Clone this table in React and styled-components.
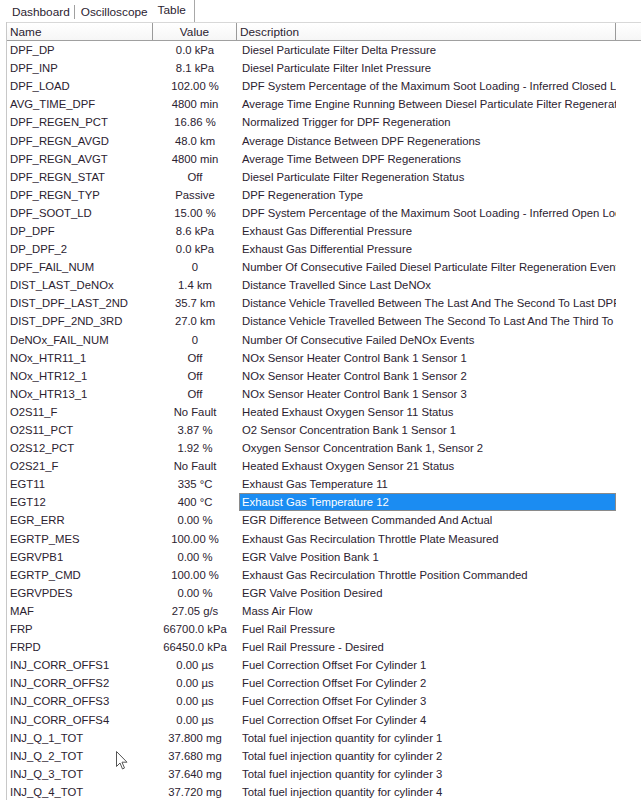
import React from 'react';
import styled, { createGlobalStyle } from 'styled-components';

const rows = [
  ['DPF_DP', '0.0 kPa', 'Diesel Particulate Filter Delta Pressure'],
  ['DPF_INP', '8.1 kPa', 'Diesel Particulate Filter Inlet Pressure'],
  ['DPF_LOAD', '102.00 %', 'DPF System Percentage of the Maximum Soot Loading - Inferred Closed Loop'],
  ['AVG_TIME_DPF', '4800 min', 'Average Time Engine Running Between Diesel Particulate Filter Regenerations'],
  ['DPF_REGEN_PCT', '16.86 %', 'Normalized Trigger for DPF Regeneration'],
  ['DPF_REGN_AVGD', '48.0 km', 'Average Distance Between DPF Regenerations'],
  ['DPF_REGN_AVGT', '4800 min', 'Average Time Between DPF Regenerations'],
  ['DPF_REGN_STAT', 'Off', 'Diesel Particulate Filter Regeneration Status'],
  ['DPF_REGN_TYP', 'Passive', 'DPF Regeneration Type'],
  ['DPF_SOOT_LD', '15.00 %', 'DPF System Percentage of the Maximum Soot Loading - Inferred Open Loop'],
  ['DP_DPF', '8.6 kPa', 'Exhaust Gas Differential Pressure'],
  ['DP_DPF_2', '0.0 kPa', 'Exhaust Gas Differential Pressure'],
  ['DPF_FAIL_NUM', '0', 'Number Of Consecutive Failed Diesel Particulate Filter Regeneration Events'],
  ['DIST_LAST_DeNOx', '1.4 km', 'Distance Travelled Since Last DeNOx'],
  ['DIST_DPF_LAST_2ND', '35.7 km', 'Distance Vehicle Travelled Between The Last And The Second To Last DPF'],
  ['DIST_DPF_2ND_3RD', '27.0 km', 'Distance Vehicle Travelled Between The Second To Last And The Third To Last'],
  ['DeNOx_FAIL_NUM', '0', 'Number Of Consecutive Failed DeNOx Events'],
  ['NOx_HTR11_1', 'Off', 'NOx Sensor Heater Control Bank 1 Sensor 1'],
  ['NOx_HTR12_1', 'Off', 'NOx Sensor Heater Control Bank 1 Sensor 2'],
  ['NOx_HTR13_1', 'Off', 'NOx Sensor Heater Control Bank 1 Sensor 3'],
  ['O2S11_F', 'No Fault', 'Heated Exhaust Oxygen Sensor 11 Status'],
  ['O2S11_PCT', '3.87 %', 'O2 Sensor Concentration Bank 1 Sensor 1'],
  ['O2S12_PCT', '1.92 %', 'Oxygen Sensor Concentration Bank 1, Sensor 2'],
  ['O2S21_F', 'No Fault', 'Heated Exhaust Oxygen Sensor 21 Status'],
  ['EGT11', '335 °C', 'Exhaust Gas Temperature 11'],
  ['EGT12', '400 °C', 'Exhaust Gas Temperature 12', true],
  ['EGR_ERR', '0.00 %', 'EGR Difference Between Commanded And Actual'],
  ['EGRTP_MES', '100.00 %', 'Exhaust Gas Recirculation Throttle Plate Measured'],
  ['EGRVPB1', '0.00 %', 'EGR Valve Position Bank 1'],
  ['EGRTP_CMD', '100.00 %', 'Exhaust Gas Recirculation Throttle Position Commanded'],
  ['EGRVPDES', '0.00 %', 'EGR Valve Position Desired'],
  ['MAF', '27.05 g/s', 'Mass Air Flow'],
  ['FRP', '66700.0 kPa', 'Fuel Rail Pressure'],
  ['FRPD', '66450.0 kPa', 'Fuel Rail Pressure - Desired'],
  ['INJ_CORR_OFFS1', '0.00 µs', 'Fuel Correction Offset For Cylinder 1'],
  ['INJ_CORR_OFFS2', '0.00 µs', 'Fuel Correction Offset For Cylinder 2'],
  ['INJ_CORR_OFFS3', '0.00 µs', 'Fuel Correction Offset For Cylinder 3'],
  ['INJ_CORR_OFFS4', '0.00 µs', 'Fuel Correction Offset For Cylinder 4'],
  ['INJ_Q_1_TOT', '37.800 mg', 'Total fuel injection quantity for cylinder 1'],
  ['INJ_Q_2_TOT', '37.680 mg', 'Total fuel injection quantity for cylinder 2'],
  ['INJ_Q_3_TOT', '37.640 mg', 'Total fuel injection quantity for cylinder 3'],
  ['INJ_Q_4_TOT', '37.720 mg', 'Total fuel injection quantity for cylinder 4'],
];

const GlobalStyle = createGlobalStyle`
  body {
    margin: 0;
    background: #fff;
    font-family: 'Liberation Sans', Arial, sans-serif;
    font-size: 11.3px;
    color: #2b2230;
    overflow: hidden;
  }
`;

const Page = styled.div`
  position: relative;
  width: 641px;
  height: 800px;
  overflow: hidden;
`;

const TabBar = styled.div`
  display: flex;
  align-items: stretch;
  height: 22px;
  padding-left: 6px;
  font-size: 11.8px;
`;

const Tab = styled.div`
  display: flex;
  align-items: center;
  padding: ${p => (p.active ? '0 8px 3px 4px' : p.sep ? '2px 5px 0 6px' : '2px 5px 0 5px')};
  background: #fff;
  border-right: 1px solid ${p => (p.active ? '#a8a8a8' : 'transparent')};
  position: relative;

  &::after {
    content: '';
    display: ${p => (p.sep ? 'block' : 'none')};
    position: absolute;
    right: 0;
    top: 5px;
    height: 14px;
    width: 1px;
    background: #a0a0a0;
  }
`;

const Table = styled.div`
  margin-left: 6px;
  border-left: 1px solid #c8c8c8;
`;

const Header = styled.div`
  display: grid;
  grid-template-columns: 146px 84px 379px 1fr;
  height: 17px;
  border-top: 1px solid #d8d8d8;
  border-bottom: 1px solid #a0a0a0;
  background: linear-gradient(#ffffff, #f6f6f6);
  font-size: 11.8px;
`;

const HeadCell = styled.div`
  display: flex;
  align-items: center;
  justify-content: ${p => (p.center ? 'center' : 'flex-start')};
  padding-left: ${p => (p.center ? '0' : '3px')};
  padding-top: 1px;
  border-right: 1px solid #9a9a9a;
  &:last-child {
    border-right: none;
  }
`;

const Row = styled.div`
  display: grid;
  grid-template-columns: 146px 84px 379px 1fr;
  height: 18.1px;
  align-items: center;
  white-space: nowrap;
`;

const NameCell = styled.div`
  padding-left: 3px;
  overflow: hidden;
`;

const ValueCell = styled.div`
  text-align: center;
  overflow: hidden;
`;

const DescCell = styled.div`
  height: 100%;
  display: flex;
  align-items: center;
  overflow: hidden;
  padding-left: 3px;
  margin-left: 2px;
  box-sizing: border-box;
  ${p =>
    p.selected &&
    `
    background: #1b8cf2;
    color: #fff;
    border: 1px solid #8a8a8a;
    padding-left: 2px;
  `}
`;

const Cursor = styled.svg`
  position: absolute;
  left: 116px;
  top: 751px;
`;

export default function App() {
  return (
    <>
      <GlobalStyle />
      <Page>
        <TabBar>
          <Tab sep>Dashboard</Tab>
          <Tab>Oscilloscope</Tab>
          <Tab active>Table</Tab>
        </TabBar>
        <Table>
          <Header>
            <HeadCell>Name</HeadCell>
            <HeadCell center>Value</HeadCell>
            <HeadCell>Description</HeadCell>
            <HeadCell />
          </Header>
          {rows.map(([name, value, desc, sel]) => (
            <Row key={name}>
              <NameCell>{name}</NameCell>
              <ValueCell>{value}</ValueCell>
              <DescCell selected={sel}>{desc}</DescCell>
              <div />
            </Row>
          ))}
        </Table>
        <Cursor width="12" height="19" viewBox="0 0 12 19">
          <path d="M0.5 0.5 L0.5 15.5 L4 12 L6.5 18 L8.5 17 L6 11.2 L11 11.2 Z" fill="#fff" stroke="#555" strokeWidth="1" />
        </Cursor>
      </Page>
    </>
  );
}
